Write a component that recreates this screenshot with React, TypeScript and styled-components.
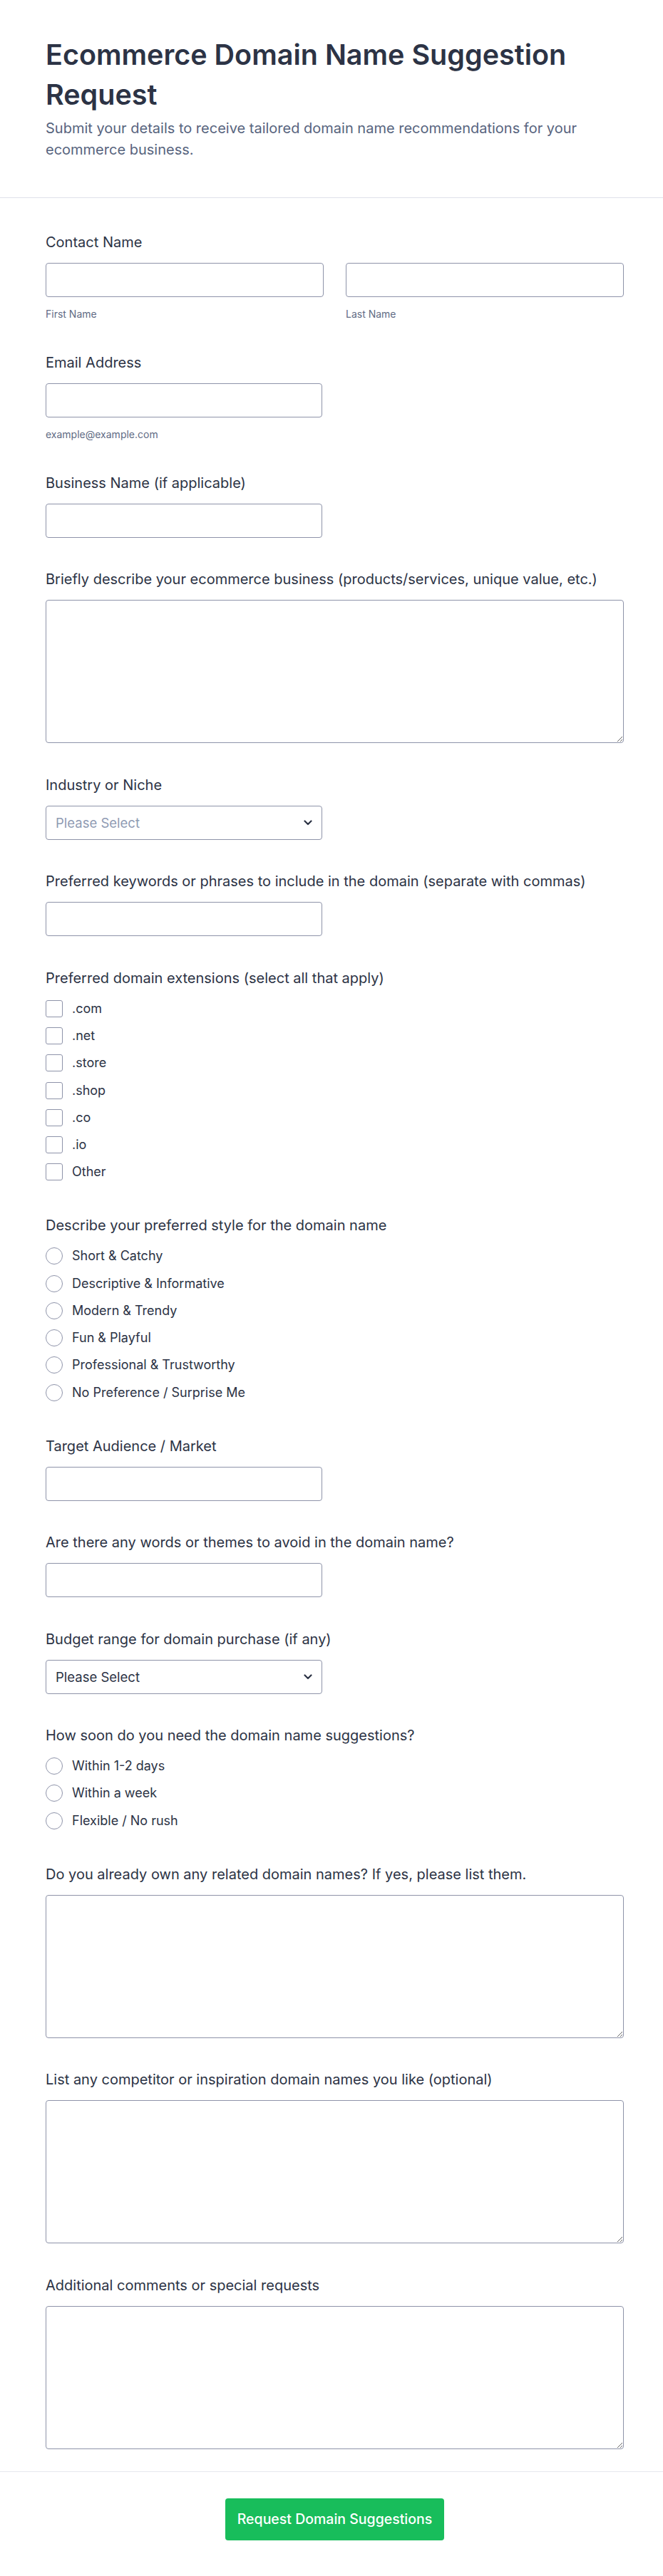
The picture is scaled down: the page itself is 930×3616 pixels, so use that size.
import React from "react";
import styled, { createGlobalStyle } from "styled-components";

const GlobalStyle = createGlobalStyle`
  html, body {
    margin: 0;
    padding: 0;
    background: #ffffff;
  }
  body {
    font-family: Inter, "Noto Sans", "Liberation Sans", sans-serif;
    color: #2c3345;
  }
  * { box-sizing: border-box; }
`;

const Page = styled.div`
  width: 100%;
  background: #ffffff;
  display: flex;
  flex-direction: column;
`;

const Header = styled.header`
  padding: 49px 55px 52px 64px;
  border-bottom: 1px solid #dfe1e9;
`;

const Title = styled.h1`
  margin: 0;
  font-size: 39.5px;
  font-weight: 600;
  line-height: 56px;
  color: #2c3345;
`;

const Subtitle = styled.p`
  margin: 4px 0 0;
  font-size: 20px;
  font-weight: 400;
  line-height: 30px;
  color: #57647e;
`;

const Fields = styled.div`
  padding: 26.5px 55px 8px 64px;
  display: flex;
  flex-direction: column;
`;

const Field = styled.div`
  padding: 23.25px 0;
  display: flex;
  flex-direction: column;
  align-items: flex-start;
`;

const Label = styled.label`
  display: block;
  font-size: 20px;
  font-weight: 400;
  line-height: 24px;
  color: #2c3345;
  margin-bottom: 17px;
`;

const NameRow = styled.div`
  width: 100%;
  display: grid;
  grid-template-columns: 390px 390px;
  column-gap: 31px;
`;

const NameCell = styled.div`
  display: flex;
  flex-direction: column;
`;

const TextInput = styled.input<{ $short?: boolean }>`
  width: ${(p) => (p.$short ? "388px" : "100%")};
  height: 48px;
  margin: 0;
  padding: 0 13px;
  border: 1px solid #8e93a9;
  border-radius: 4px;
  background: #ffffff;
  font-family: inherit;
  font-size: 18px;
  color: #2c3345;
  outline: none;
`;

const SubLabel = styled.span`
  display: block;
  margin-top: 15.5px;
  font-size: 14px;
  line-height: 18px;
  color: #5f6b84;
`;

const TextArea = styled.textarea`
  display: block;
  width: 100%;
  height: 201px;
  margin: 0;
  padding: 10px 13px;
  border: 1px solid #8e93a9;
  border-radius: 4px;
  background: #ffffff;
  font-family: inherit;
  font-size: 18px;
  color: #2c3345;
  resize: vertical;
  outline: none;
`;

const SelectBox = styled.div<{ $placeholder?: boolean }>`
  width: 388px;
  height: 48px;
  padding: 0 13px 0 13px;
  border: 1px solid #8e93a9;
  border-radius: 4px;
  background: #ffffff;
  display: flex;
  align-items: center;
  justify-content: space-between;
  font-size: 18.5px;
  color: ${(p) => (p.$placeholder ? "#8f9bb3" : "#2c3345")};
`;

const Chevron = styled.svg`
  width: 12px;
  height: 8px;
  flex: none;
`;

const OptionList = styled.div`
  margin-top: 2px;
  padding-bottom: 4.5px;
  display: flex;
  flex-direction: column;
  gap: 14.25px;
`;

const OptionRow = styled.div`
  display: flex;
  align-items: center;
  gap: 13px;
  height: 24px;
`;

const Box = styled.span<{ $round?: boolean }>`
  width: 24px;
  height: 24px;
  flex: none;
  border: 1px solid #8e93a9;
  border-radius: ${(p) => (p.$round ? "50%" : "3px")};
  background: #ffffff;
`;

const OptionText = styled.span`
  font-size: 18px;
  line-height: 24px;
  color: #2c3345;
`;

const Footer = styled.div`
  border-top: 1px solid #e6e8ee;
  padding: 37px 55px 50px 64px;
  display: flex;
  justify-content: center;
`;

const SubmitButton = styled.button`
  height: 59px;
  padding: 0 17px;
  border: none;
  border-radius: 4px;
  background: #18bd5b;
  color: #ffffff;
  font-family: inherit;
  font-size: 19.5px;
  font-weight: 500;
  cursor: pointer;
`;

type Opt = { label: string; round?: boolean; options: string[] };

const Options: React.FC<Opt> = ({ label, round, options }) => (
  <Field>
    <Label>{label}</Label>
    <OptionList>
      {options.map((o) => (
        <OptionRow key={o}>
          <Box $round={round} />
          <OptionText>{o}</OptionText>
        </OptionRow>
      ))}
    </OptionList>
  </Field>
);

const Select: React.FC<{ label: string; placeholder?: boolean }> = ({ label, placeholder }) => (
  <Field>
    <Label>{label}</Label>
    <SelectBox $placeholder={placeholder}>
      <span>Please Select</span>
      <Chevron viewBox="0 0 12 8">
        <path d="M1.5 1.5 L6 6 L10.5 1.5" fill="none" stroke="#2c3345" strokeWidth="2.2" strokeLinecap="round" strokeLinejoin="round" />
      </Chevron>
    </SelectBox>
  </Field>
);

const Short: React.FC<{ label: string; sub?: string }> = ({ label, sub }) => (
  <Field>
    <Label>{label}</Label>
    <TextInput $short type="text" />
    {sub && <SubLabel>{sub}</SubLabel>}
  </Field>
);

const Long: React.FC<{ label: string }> = ({ label }) => (
  <Field>
    <Label>{label}</Label>
    <TextArea />
  </Field>
);

export default function App() {
  return (
    <Page>
      <GlobalStyle />
      <Header>
        <Title>Ecommerce Domain Name Suggestion Request</Title>
        <Subtitle>
          Submit your details to receive tailored domain name recommendations for your ecommerce business.
        </Subtitle>
      </Header>
      <Fields>
        <Field>
          <Label>Contact Name</Label>
          <NameRow>
            <NameCell>
              <TextInput type="text" />
              <SubLabel>First Name</SubLabel>
            </NameCell>
            <NameCell>
              <TextInput type="text" />
              <SubLabel>Last Name</SubLabel>
            </NameCell>
          </NameRow>
        </Field>
        <Short label="Email Address" sub="example@example.com" />
        <Short label="Business Name (if applicable)" />
        <Long label="Briefly describe your ecommerce business (products/services, unique value, etc.)" />
        <Select label="Industry or Niche" placeholder />
        <Short label="Preferred keywords or phrases to include in the domain (separate with commas)" />
        <Options
          label="Preferred domain extensions (select all that apply)"
          options={[".com", ".net", ".store", ".shop", ".co", ".io", "Other"]}
        />
        <Options
          label="Describe your preferred style for the domain name"
          round
          options={[
            "Short & Catchy",
            "Descriptive & Informative",
            "Modern & Trendy",
            "Fun & Playful",
            "Professional & Trustworthy",
            "No Preference / Surprise Me",
          ]}
        />
        <Short label="Target Audience / Market" />
        <Short label="Are there any words or themes to avoid in the domain name?" />
        <Select label="Budget range for domain purchase (if any)" />
        <Options
          label="How soon do you need the domain name suggestions?"
          round
          options={["Within 1-2 days", "Within a week", "Flexible / No rush"]}
        />
        <Long label="Do you already own any related domain names? If yes, please list them." />
        <Long label="List any competitor or inspiration domain names you like (optional)" />
        <Long label="Additional comments or special requests" />
      </Fields>
      <Footer>
        <SubmitButton type="button">Request Domain Suggestions</SubmitButton>
      </Footer>
    </Page>
  );
}
